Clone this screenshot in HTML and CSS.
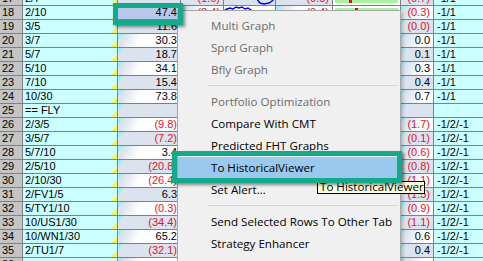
FILE: index.html
```html
<!DOCTYPE html>
<html lang="en">
<head>
    <meta charset="UTF-8">
    <title>Curve Grid - Context Menu</title>
    <link rel="stylesheet" href="styles.css">
</head>
<body>
    <div class="sheet">
        <div class="row alt">
            <div class="num">17</div><div class="name">2/7</div><div class="val"></div>
            <div class="val neg">(1.6)</div>
            <div class="spark"><svg width="51" height="13"><polyline points="0,6 6,5 12,6 18,4 24,5 30,3 33,7 36,11 40,12 45,11 48,9 51,6" /></svg></div>
            <div class="val neg">(0.5)</div>
            <div class="bar"><span class="fill"><i class="tick" style="margin-left:14px"></i></span></div>
            <div class="val neg">(0.7)</div><div class="ratio">-1/1</div>
        </div>
        <div class="row">
            <div class="num">18</div><div class="name">2/10</div><div class="val sel">47.4</div>
            <div class="val neg">(2.4)</div>
            <div class="spark"><svg width="51" height="13"><polyline points="0,5 3,3 6,2 9,3 12,1 15,2 18,1 21,3 24,2 27,4 30,6 34,9 40,10 46,8 51,7" /></svg></div>
            <div class="val neg">(0.4)</div>
            <div class="bar"><span class="fill"><i class="tick" style="margin-left:20px"></i></span></div>
            <div class="val neg">(0.3)</div><div class="ratio">-1/1</div>
        </div>
        <div class="row alt">
            <div class="num">19</div><div class="name">3/5</div><div class="val">11.6</div>
            <div class="val"></div><div class="spark"></div><div class="val"></div><div class="bar"></div>
            <div class="val neg">(0.0)</div><div class="ratio">-1/1</div>
        </div>
        <div class="row">
            <div class="num">20</div><div class="name">3/7</div><div class="val">30.3</div>
            <div class="val"></div><div class="spark"></div><div class="val"></div><div class="bar"></div>
            <div class="val">0.0</div><div class="ratio">-1/1</div>
        </div>
        <div class="row alt">
            <div class="num">21</div><div class="name">5/7</div><div class="val">18.7</div>
            <div class="val"></div><div class="spark"></div><div class="val"></div><div class="bar"></div>
            <div class="val">0.1</div><div class="ratio">-1/1</div>
        </div>
        <div class="row">
            <div class="num">22</div><div class="name">5/10</div><div class="val">34.1</div>
            <div class="val"></div><div class="spark"></div><div class="val"></div><div class="bar"></div>
            <div class="val">0.3</div><div class="ratio">-1/1</div>
        </div>
        <div class="row alt">
            <div class="num">23</div><div class="name">7/10</div><div class="val">15.4</div>
            <div class="val"></div><div class="spark"></div><div class="val"></div><div class="bar"></div>
            <div class="val">0.4</div><div class="ratio">-1/1</div>
        </div>
        <div class="row">
            <div class="num">24</div><div class="name">10/30</div><div class="val">73.8</div>
            <div class="val"></div><div class="spark"></div><div class="val"></div><div class="bar"></div>
            <div class="val">0.7</div><div class="ratio">-1/1</div>
        </div>
        <div class="row alt">
            <div class="num">25</div><div class="name">== FLY</div><div class="val"></div>
            <div class="val"></div><div class="spark"></div><div class="val"></div><div class="bar"></div>
            <div class="val"></div><div class="ratio"></div>
        </div>
        <div class="row">
            <div class="num">26</div><div class="name">2/3/5</div><div class="val neg">(9.8)</div>
            <div class="val"></div><div class="spark"></div><div class="val"></div><div class="bar"></div>
            <div class="val neg">(1.7)</div><div class="ratio">-1/2/-1</div>
        </div>
        <div class="row alt">
            <div class="num">27</div><div class="name">3/5/7</div><div class="val neg">(7.2)</div>
            <div class="val"></div><div class="spark"></div><div class="val"></div><div class="bar"></div>
            <div class="val neg">(0.1)</div><div class="ratio">-1/2/-1</div>
        </div>
        <div class="row">
            <div class="num">28</div><div class="name">5/7/10</div><div class="val">3.4</div>
            <div class="val"></div><div class="spark"></div><div class="val"></div><div class="bar"></div>
            <div class="val neg">(0.6)</div><div class="ratio">-1/2/-1</div>
        </div>
        <div class="row alt">
            <div class="num">29</div><div class="name">2/5/10</div><div class="val neg">(20.8)</div>
            <div class="val"></div><div class="spark"></div><div class="val"></div><div class="bar"></div>
            <div class="val neg">(0.8)</div><div class="ratio">-1/2/-1</div>
        </div>
        <div class="row">
            <div class="num">30</div><div class="name">2/10/30</div><div class="val neg">(26.4)</div>
            <div class="val"></div><div class="spark"></div><div class="val"></div><div class="bar"></div>
            <div class="val neg">(1.1)</div><div class="ratio">-1/2/-1</div>
        </div>
        <div class="row alt">
            <div class="num">31</div><div class="name">2/FV1/5</div><div class="val">6.3</div>
            <div class="val"></div><div class="spark"></div><div class="val"></div><div class="bar"></div>
            <div class="val neg">(1.5)</div><div class="ratio">-1/2/-1</div>
        </div>
        <div class="row">
            <div class="num">32</div><div class="name">5/TY1/10</div><div class="val neg">(0.3)</div>
            <div class="val"></div><div class="spark"></div><div class="val"></div><div class="bar"></div>
            <div class="val neg">(0.9)</div><div class="ratio">-1/2/-1</div>
        </div>
        <div class="row alt">
            <div class="num">33</div><div class="name">10/US1/30</div><div class="val neg">(34.4)</div>
            <div class="val"></div><div class="spark"></div><div class="val"></div><div class="bar"></div>
            <div class="val neg">(1.1)</div><div class="ratio">-1/2/-1</div>
        </div>
        <div class="row">
            <div class="num">34</div><div class="name">10/WN1/30</div><div class="val">65.2</div>
            <div class="val"></div><div class="spark"></div><div class="val"></div><div class="bar"></div>
            <div class="val">0.6</div><div class="ratio">-1/2/-1</div>
        </div>
        <div class="row alt">
            <div class="num">35</div><div class="name">2/TU1/7</div><div class="val neg">(32.1)</div>
            <div class="val"></div><div class="spark"></div><div class="val"></div><div class="bar"></div>
            <div class="val">0.4</div><div class="ratio">-1/2/-1</div>
        </div>
        <div class="row">
            <div class="num">36</div><div class="name"></div><div class="val"></div>
            <div class="val"></div><div class="spark"></div><div class="val"></div><div class="bar"></div>
            <div class="val"></div><div class="ratio"></div>
        </div>
    </div>

    <!-- right-click menu -->
    <div class="menu">
        <div class="item off">Multi Graph</div>
        <div class="item off">Sprd Graph</div>
        <div class="item off">Bfly Graph</div>
        <div class="sep"></div>
        <div class="item off">Portfolio Optimization</div>
        <div class="item">Compare With CMT</div>
        <div class="item">Predicted FHT Graphs</div>
        <div class="item hot">To HistoricalViewer</div>
        <div class="item">Set Alert...</div>
        <div class="sep"></div>
        <div class="item">Send Selected Rows To Other Tab</div>
        <div class="item">Strategy Enhancer</div>
    </div>

    <div class="tip">To HistoricalViewer</div>

    <!-- annotation boxes -->
    <div class="mark mark-cell"></div>
    <div class="mark mark-item"></div>
</body>
</html>
```

FILE: styles.css
```css
* {
    box-sizing: border-box;
}
body {
    margin: 0;
    width: 483px;
    height: 261px;
    overflow: hidden;
    position: relative;
    background-color: white;
    font-family: "Liberation Sans", Arial, sans-serif;
    font-size: 11px;
    color: black;
}
.sheet {
    margin-top: -8px;
}
.row {
    display: grid;
    grid-template-columns: 23px 95px 63px 43px 52px 57px 68px 33px 60px;
    height: 14px;
}
.row > div {
    border-right: 1px solid #808080;
    border-bottom: 1px solid #808080;
    line-height: 13px;
    white-space: nowrap;
    overflow: hidden;
}
.num {
    background-color: #c4c4c4;
    padding-left: 2px;
}
.name {
    background: linear-gradient(to top left, #f3f35a 50%, transparent 50%) right bottom / 6px 6px no-repeat, #ccffff;
    padding-left: 2px;
}
.val {
    text-align: right;
    padding-right: 3px;
    background: linear-gradient(to bottom right, #a4eef6 50%, transparent 50%) left top / 6px 6px no-repeat,
        linear-gradient(115deg, #dbe3ee 0, #dbe3ee 7px, white 22px);
}
.alt .val {
    background: linear-gradient(to bottom right, #a4eef6 50%, transparent 50%) left top / 6px 6px no-repeat, #dbe3ee;
}
.row .sel {
    background: #b9c8e8;
}
.neg {
    color: #e0142a;
}
.spark {
    background-color: white;
}
.alt .spark {
    background-color: #dbe3ee;
}
.spark svg {
    display: block;
}
.spark polyline {
    fill: none;
    stroke: #0000ff;
    stroke-width: 1.5;
}
.bar {
    padding: 2px;
    background-color: white;
}
.fill {
    display: block;
    height: 100%;
    background-color: #a6f3a0;
}
.tick {
    display: block;
    width: 3px;
    height: 100%;
    background-color: #ff0000;
}
.ratio {
    background-color: #ccffff;
    padding-left: 3px;
}

/* context menu */
.menu {
    position: absolute;
    left: 177px;
    top: 10px;
    width: 224px;
    height: 262px;
    padding: 4px 2px 0 0;
    background-color: #f0f0f0;
    border: 1px solid #a7a7a7;
    box-shadow: 2px 2px 3px rgba(0, 0, 0, 0.2);
    font-family: "Open Sans", "Liberation Sans", sans-serif;
    font-size: 11.6px;
}
.item {
    height: 22px;
    line-height: 22px;
    padding-left: 33px;
    white-space: nowrap;
}
.item.off {
    color: #6d6d6d;
}
.item.hot {
    background-color: #99c9ef;
}
.sep {
    height: 10px;
    margin-left: 30px;
    padding-top: 4px;
}
.sep::before {
    content: "";
    display: block;
    border-top: 1px solid #d5d5d5;
}
.tip {
    position: absolute;
    left: 317px;
    top: 181px;
    width: 108px;
    height: 13px;
    padding-left: 2px;
    background-color: #ffffe1;
    border: 1px solid black;
    font-family: "Open Sans", "Liberation Sans", sans-serif;
    font-size: 11.6px;
    line-height: 10px;
    white-space: nowrap;
}
.mark {
    position: absolute;
    border: 5px solid #15a98b;
    box-shadow: 2px 2px 3px rgba(0, 0, 0, 0.45);
}
.mark-cell {
    left: 113px;
    top: 3px;
    width: 70px;
    height: 22px;
}
.mark-item {
    left: 172px;
    top: 151px;
    width: 230px;
    height: 32px;
}
```
